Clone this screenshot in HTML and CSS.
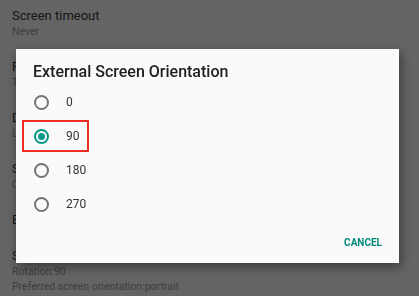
FILE: index.html
```html
<!DOCTYPE html>
<html lang="en">
<head>
    <meta charset="UTF-8">
    <meta name="viewport" content="width=device-width, initial-scale=1.0">
    <title>Display settings</title>
    <link rel="stylesheet" href="styles.css">
</head>
<body>
    <!-- settings list behind the dialog -->
    <ul class="settings">
        <li class="item">
            <div class="item-title">Screen timeout</div>
            <div class="item-summary">Never</div>
        </li>
        <li class="item">
            <div class="item-title">Resolution</div>
            <div class="item-summary">TV default</div>
        </li>
        <li class="item">
            <div class="item-title">Daydream</div>
            <div class="item-summary">Lights</div>
        </li>
        <li class="item">
            <div class="item-title">Screen saver</div>
            <div class="item-summary">Clock</div>
        </li>
        <li class="item single">
            <div class="item-title">Brightness level</div>
        </li>
        <li class="item">
            <div class="item-title">Screen orientation</div>
            <div class="item-summary">Rotation:90</div>
            <div class="item-summary">Preferred screen orientation:portrait</div>
        </li>
    </ul>

    <div class="scrim">
        <div class="dialog">
            <h2 class="dialog-title">External Screen Orientation</h2>
            <div class="choices">
                <label class="choice"><span class="radio"></span><span class="choice-text">0</span></label>
                <label class="choice marked"><span class="radio checked"></span><span class="choice-text">90</span><span class="mark"></span></label>
                <label class="choice"><span class="radio"></span><span class="choice-text">180</span></label>
                <label class="choice"><span class="radio"></span><span class="choice-text">270</span></label>
            </div>
            <div class="actions">
                <button class="btn-text">CANCEL</button>
            </div>
        </div>
    </div>
</body>
</html>
```

FILE: styles.css
```css
/* page */
body {
    margin: 0;
    background: #fafafa;
    font-family: Roboto, 'Noto Sans', sans-serif;
    height: 296px;
    overflow: hidden;
}

/* settings list */
.settings {
    list-style: none;
    margin: 0;
    padding: 7px 0 0 12px;
}

.item {
    height: 51px;
}

.item.single {
    height: 36px;
}

.item-title {
    font-size: 13px;
    color: #3a3a3a;
    line-height: 17px;
}

.item-summary {
    font-size: 10.5px;
    color: #9a9a9a;
    line-height: 15px;
}

/* dim layer + dialog */
.scrim {
    position: fixed;
    inset: 0;
    background: rgba(0, 0, 0, 0.6);
}

.dialog {
    margin: 49px 20px 0 16px;
    height: 214px;
    box-sizing: border-box;
    background: #fafafa;
    box-shadow: 2px 4px 10px rgba(0, 0, 0, 0.45);
    display: flex;
    flex-direction: column;
}

.dialog-title {
    margin: 0;
    padding: 13px 0 0 17px;
    font-size: 16px;
    font-weight: 500;
    color: #212121;
    line-height: 20px;
}

.choices {
    padding-top: 3px;
}

.choice {
    position: relative;
    display: flex;
    align-items: center;
    height: 34px;
    padding-left: 18px;
}

.choice-text {
    margin-left: 17px;
    font-size: 12px;
    color: #333;
}

/* radio button */
.radio {
    width: 11px;
    height: 11px;
    border: 2px solid #757575;
    border-radius: 50%;
    position: relative;
}

.radio.checked {
    border-color: #009688;
}

.radio.checked::after {
    content: "";
    position: absolute;
    left: 2px;
    top: 2px;
    width: 7px;
    height: 7px;
    border-radius: 50%;
    background: #009688;
}

/* red annotation box */
.mark {
    position: absolute;
    left: 6px;
    top: 1px;
    width: 63px;
    height: 28px;
    border: 2px solid #ee2b24;
}

.actions {
    margin-top: auto;
    display: flex;
    justify-content: flex-end;
    padding: 0 17px 15px 0;
}

.btn-text {
    background: none;
    border: none;
    padding: 0;
    font-family: Roboto, sans-serif;
    font-size: 10px;
    font-weight: 700;
    letter-spacing: 0;
    color: #00897b;
}
```
